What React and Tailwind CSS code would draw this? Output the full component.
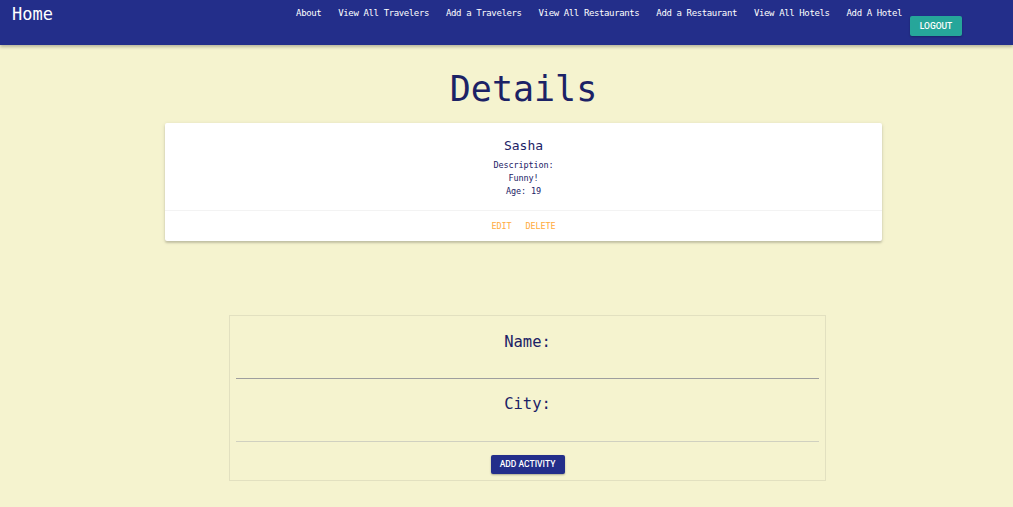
import React from "react"

const links = ["About", "View All Travelers", "Add a Travelers", "View All Restaurants", "Add a Restaurant", "View All Hotels", "Add A Hotel"]

const mono = "font-['DejaVu_Sans_Mono','Liberation_Mono',monospace]"

const App = () => {
  return (
    <div className={`min-h-[507px] bg-[#f5f3cf] ${mono}`}>
      <nav className="h-[45px] bg-[#232e8a] shadow-[0_2px_3px_rgba(0,0,0,0.25)] flex items-start relative z-10">
        <a className="text-white text-[17px] leading-none mt-[6px] ml-[12px]">Home</a>
        <div className="ml-auto flex items-start mr-[51px]">
          <ul className="flex gap-[17px] mt-[7px]">
            {links.map((l) => (
              <li key={l} className="text-white text-[9px] tracking-[-0.38px] leading-[12px] whitespace-nowrap">
                {l}
              </li>
            ))}
          </ul>
          <button className="ml-[8px] mt-[16px] w-[52px] h-[20px] bg-[#26a69a] text-white text-[8.5px] font-['Roboto',sans-serif] font-medium rounded-[2px] shadow-[0_1px_2px_rgba(0,0,0,0.25)]">
            LOGOUT
          </button>
        </div>
      </nav>

      <h1 className="text-center text-[#1c2266] text-[35px] leading-none pt-[27px] pl-[34px]">Details</h1>

      <div className="ml-[165px] w-[717px] mt-[16px] bg-white rounded-[2px] shadow-[0_2px_2px_rgba(0,0,0,0.14),0_1px_4px_rgba(0,0,0,0.12)]">
        <div className="pt-[14px] pb-[12px] text-center text-[#1c2266]">
          <p className="text-[13px] leading-[17px]">Sasha</p>
          <div className="mt-[5px] text-[8.5px] tracking-[-0.1px] leading-[13px]">
            <p>Description:</p>
            <p>Funny!</p>
            <p>Age: 19</p>
          </div>
        </div>
        <div className="border-t border-[#f3f3f3] h-[31px] flex items-center justify-center gap-[14px] text-[#ffab40] text-[8.5px] tracking-[-0.1px]">
          <a>EDIT</a>
          <a>DELETE</a>
        </div>
      </div>

      <div className="ml-[229px] w-[597px] mt-[74px] border border-[#e2e0c0] px-[6px] pb-[6px]">
        <div className="h-[63px] border-b border-[#9e9e9e] flex items-start justify-center">
          <label className="text-[#1c2266] text-[15.5px] leading-none mt-[19px]">Name:</label>
        </div>
        <div className="h-[63px] border-b border-[#d0d0c0] flex items-start justify-center">
          <label className="text-[#1c2266] text-[15.5px] leading-none mt-[18px]">City:</label>
        </div>
        <div className="flex justify-center pt-[13px]">
          <button className="w-[74px] h-[19px] bg-[#232e8a] text-white text-[8.5px] font-['Roboto',sans-serif] font-medium rounded-[2px] shadow-[0_1px_2px_rgba(0,0,0,0.3)]">
            ADD ACTIVITY
          </button>
        </div>
      </div>
    </div>
  )
}

export default App
